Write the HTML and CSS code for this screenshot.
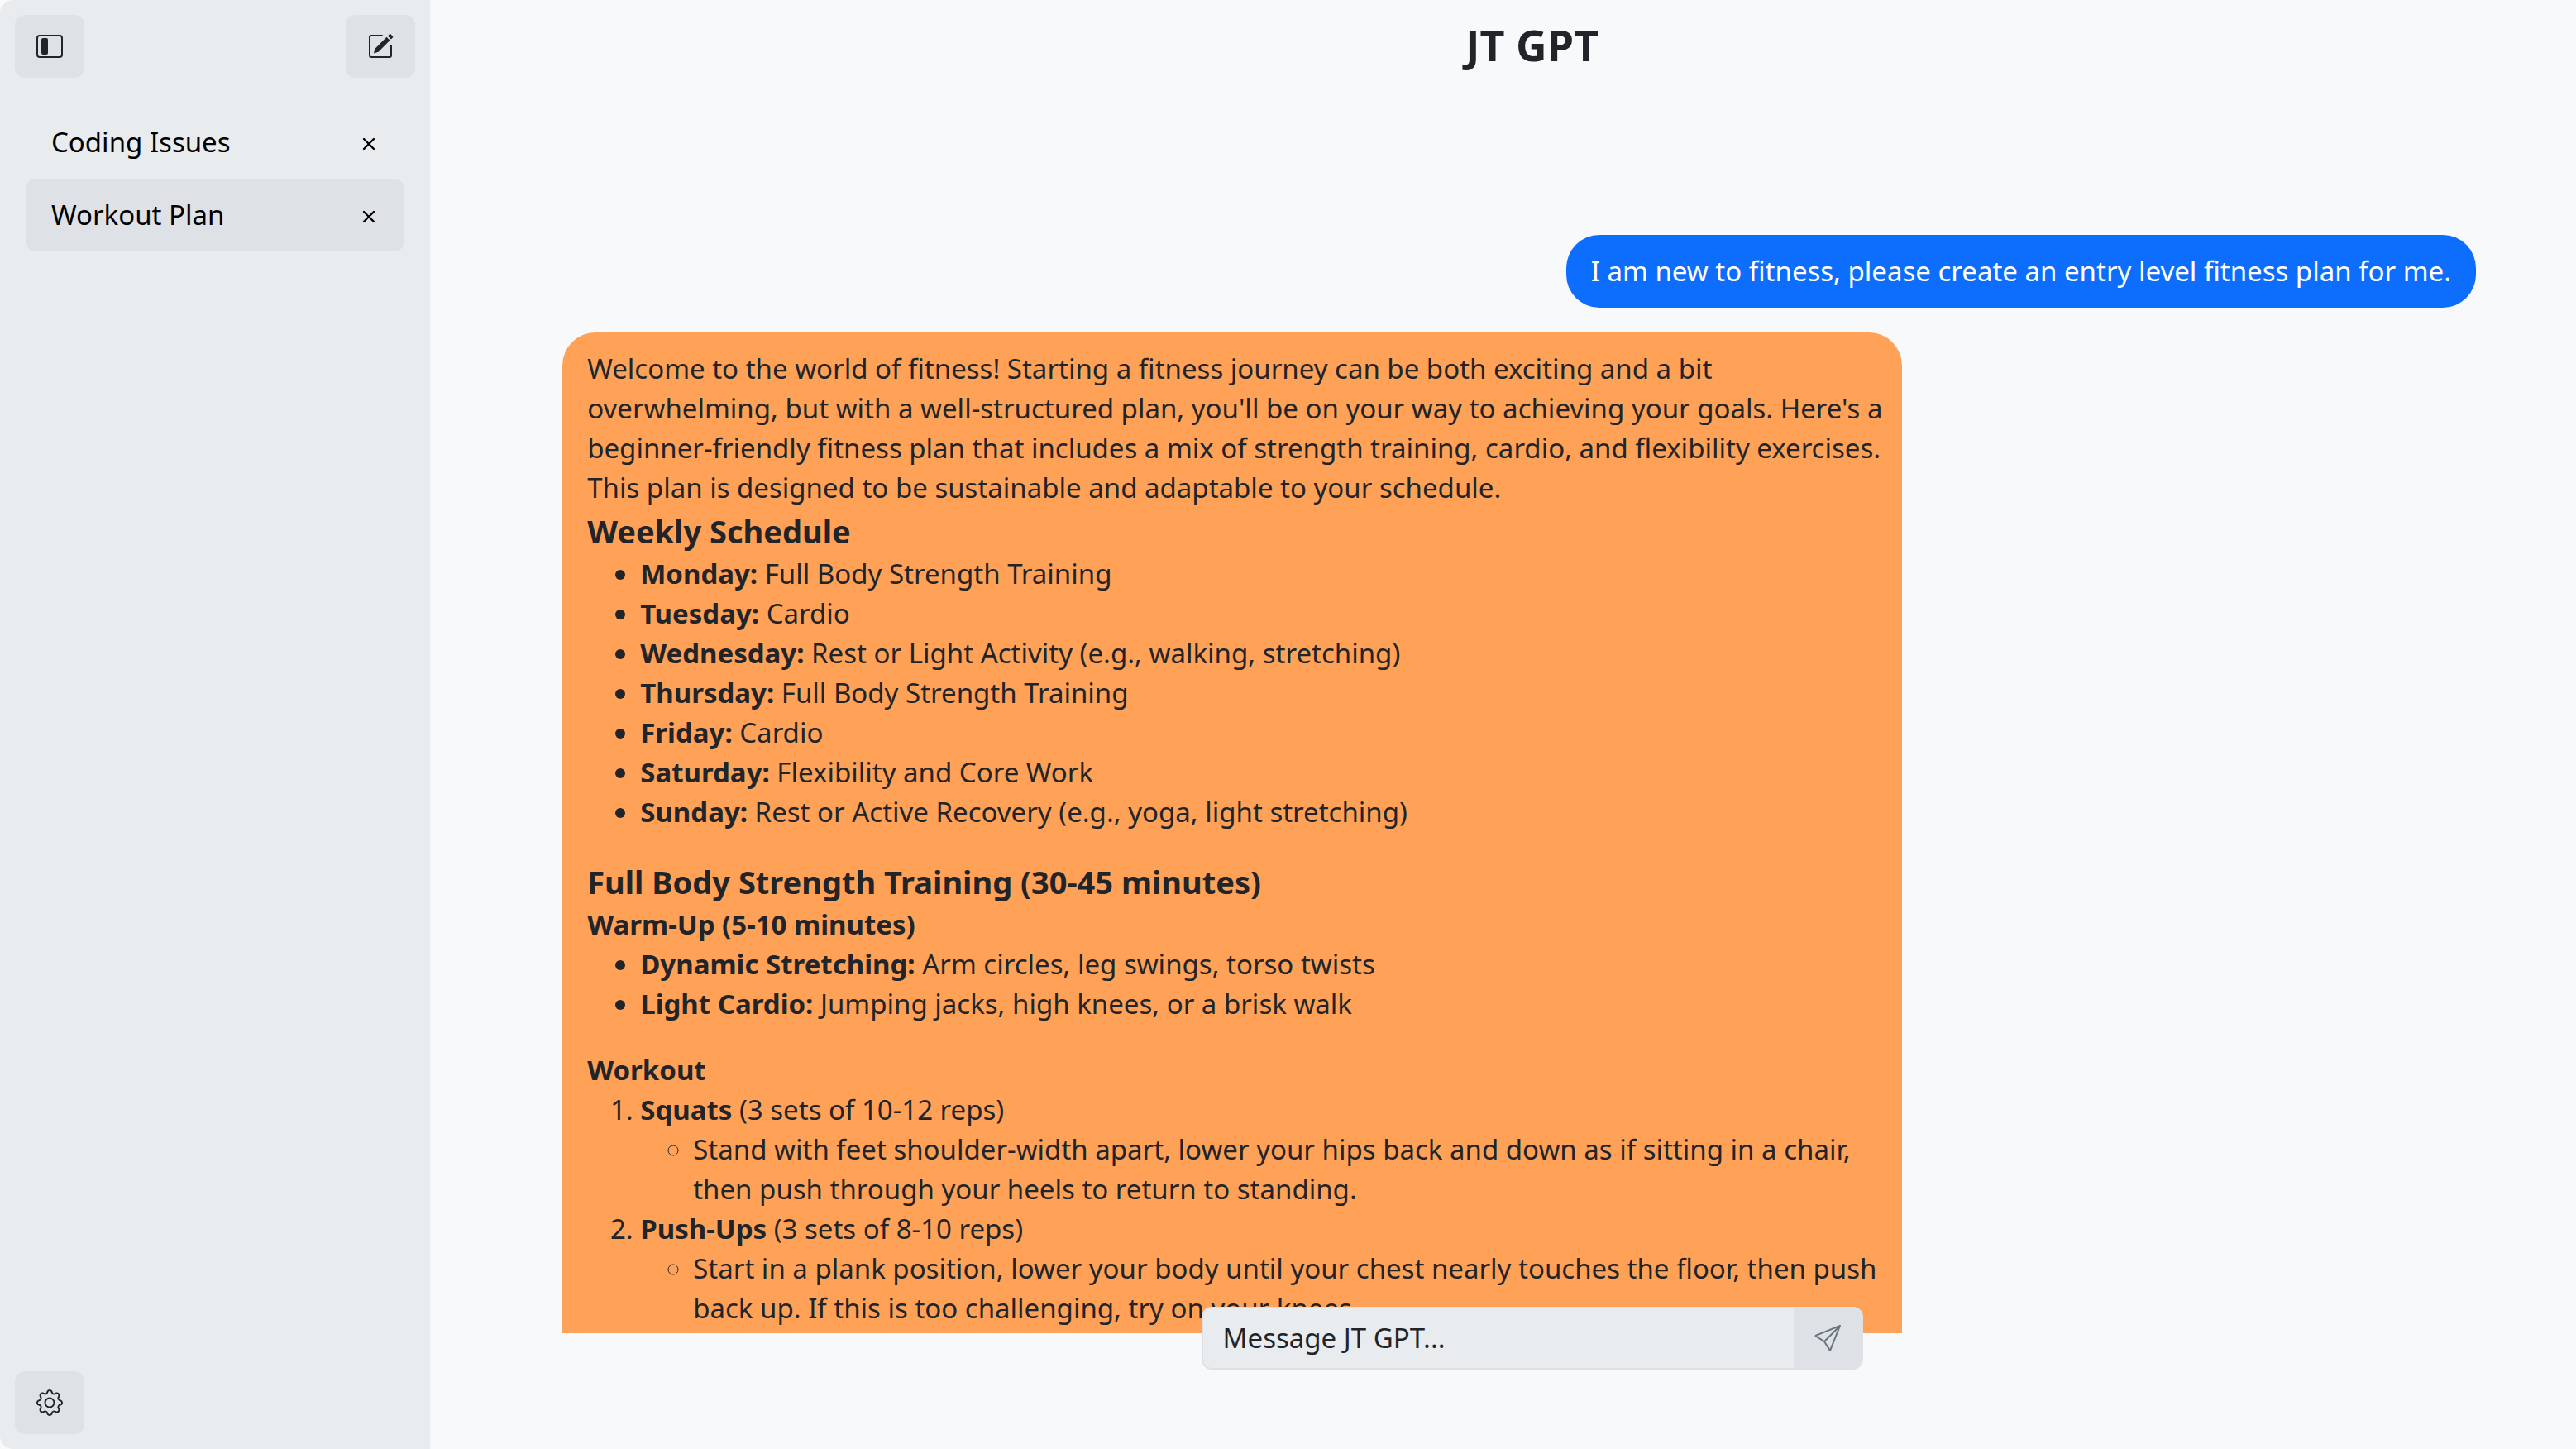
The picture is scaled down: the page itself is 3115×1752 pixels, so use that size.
FILE: index.html
```html
<!DOCTYPE html>
<html lang="en">
<head>
<meta charset="utf-8">
<meta name="viewport" content="width=device-width, initial-scale=1">
<title>JT GPT</title>
<link rel="stylesheet" href="styles.css">
</head>
<body>
<div class="app">
  <aside class="sidebar">
    <div class="toolbar">
      <button class="icon-btn" type="button" aria-label="Toggle sidebar">
        <svg class="icon" viewBox="0 0 16 16"><path d="M14 2a1 1 0 0 1 1 1v10a1 1 0 0 1-1 1H2a1 1 0 0 1-1-1V3a1 1 0 0 1 1-1zM2 1a2 2 0 0 0-2 2v10a2 2 0 0 0 2 2h12a2 2 0 0 0 2-2V3a2 2 0 0 0-2-2z"/><path d="M3 4a1 1 0 0 1 1-1h2a1 1 0 0 1 1 1v8a1 1 0 0 1-1 1H4a1 1 0 0 1-1-1z"/></svg>
      </button>
      <button class="icon-btn" type="button" aria-label="New chat">
        <svg class="icon" viewBox="0 0 16 16"><path d="M15.502 1.94a.5.5 0 0 1 0 .706L14.459 3.69l-2-2L13.502.646a.5.5 0 0 1 .707 0l1.293 1.293zm-1.75 2.456-2-2L4.939 9.21a.5.5 0 0 0-.121.196l-.805 2.414a.25.25 0 0 0 .316.316l2.414-.805a.5.5 0 0 0 .196-.12l6.813-6.814z"/><path d="M1 13.5A1.5 1.5 0 0 0 2.5 15h11a1.5 1.5 0 0 0 1.5-1.5v-6a.5.5 0 0 0-1 0v6a.5.5 0 0 1-.5.5h-11a.5.5 0 0 1-.5-.5v-11a.5.5 0 0 1 .5-.5H9a.5.5 0 0 0 0-1H2.5A1.5 1.5 0 0 0 1 2.5z"/></svg>
      </button>
    </div>
    <nav class="chats">
      <div class="chat-item">
        <a class="chat-link" href="#coding">Coding Issues</a>
        <button class="close-btn" type="button" aria-label="Delete Coding Issues"><svg class="close-icon" viewBox="0 0 16 16"><path d="M2 2l12 12M14 2L2 14"/></svg></button>
      </div>
      <div class="chat-item active">
        <a class="chat-link" href="#workout">Workout Plan</a>
        <button class="close-btn" type="button" aria-label="Delete Workout Plan"><svg class="close-icon" viewBox="0 0 16 16"><path d="M2 2l12 12M14 2L2 14"/></svg></button>
      </div>
    </nav>
    <button class="icon-btn" type="button" aria-label="Settings">
      <svg class="icon" viewBox="0 0 16 16"><path d="M8 4.754a3.246 3.246 0 1 0 0 6.492 3.246 3.246 0 0 0 0-6.492M5.754 8a2.246 2.246 0 1 1 4.492 0 2.246 2.246 0 0 1-4.492 0"/><path d="M9.796 1.343c-.527-1.79-3.065-1.79-3.592 0l-.094.319a.873.873 0 0 1-1.255.52l-.292-.16c-1.64-.892-3.433.902-2.54 2.541l.159.292a.873.873 0 0 1-.52 1.255l-.319.094c-1.79.527-1.79 3.065 0 3.592l.319.094a.873.873 0 0 1 .52 1.255l-.16.292c-.892 1.64.901 3.434 2.541 2.54l.292-.159a.873.873 0 0 1 1.255.52l.094.319c.527 1.79 3.065 1.79 3.592 0l.094-.319a.873.873 0 0 1 1.255-.52l.292.16c1.64.893 3.434-.902 2.54-2.541l-.159-.292a.873.873 0 0 1 .52-1.255l.319-.094c1.79-.527 1.79-3.065 0-3.592l-.319-.094a.873.873 0 0 1-.52-1.255l.16-.292c.893-1.64-.902-3.433-2.541-2.54l-.292.159a.873.873 0 0 1-1.255-.52zm-2.633.283c.246-.835 1.428-.835 1.674 0l.094.319a1.873 1.873 0 0 0 2.693 1.115l.291-.16c.764-.415 1.6.42 1.184 1.185l-.159.292a1.873 1.873 0 0 0 1.116 2.692l.318.094c.835.246.835 1.428 0 1.674l-.319.094a1.873 1.873 0 0 0-1.115 2.693l.16.291c.415.764-.42 1.6-1.185 1.184l-.291-.159a1.873 1.873 0 0 0-2.693 1.116l-.094.318c-.246.835-1.428.835-1.674 0l-.094-.319a1.873 1.873 0 0 0-2.692-1.115l-.292.16c-.764.415-1.6-.42-1.184-1.185l.159-.291A1.873 1.873 0 0 0 1.945 8.93l-.319-.094c-.835-.246-.835-1.428 0-1.674l.319-.094A1.873 1.873 0 0 0 3.06 4.377l-.16-.292c-.415-.764.42-1.6 1.185-1.184l.292.159a1.873 1.873 0 0 0 2.692-1.115z"/></svg>
    </button>
  </aside>

  <main class="main">
    <h1 class="title">JT GPT</h1>
    <section class="messages">
      <div class="bubble user">I am new to fitness, please create an entry level fitness plan for me.</div>
      <article class="bubble bot">
        <p>Welcome to the world of fitness! Starting a fitness journey can be both exciting and a bit overwhelming, but with a well-structured plan, you'll be on your way to achieving your goals. Here's a beginner-friendly fitness plan that includes a mix of strength training, cardio, and flexibility exercises. This plan is designed to be sustainable and adaptable to your schedule.</p>
        <h2>Weekly Schedule</h2>
        <ul>
          <li><strong>Monday:</strong> Full Body Strength Training</li>
          <li><strong>Tuesday:</strong> Cardio</li>
          <li><strong>Wednesday:</strong> Rest or Light Activity (e.g., walking, stretching)</li>
          <li><strong>Thursday:</strong> Full Body Strength Training</li>
          <li><strong>Friday:</strong> Cardio</li>
          <li><strong>Saturday:</strong> Flexibility and Core Work</li>
          <li><strong>Sunday:</strong> Rest or Active Recovery (e.g., yoga, light stretching)</li>
        </ul>
        <h2>Full Body Strength Training (30-45 minutes)</h2>
        <h3>Warm-Up (5-10 minutes)</h3>
        <ul>
          <li><strong>Dynamic Stretching:</strong> Arm circles, leg swings, torso twists</li>
          <li><strong>Light Cardio:</strong> Jumping jacks, high knees, or a brisk walk</li>
        </ul>
        <h3>Workout</h3>
        <ol>
          <li><strong>Squats</strong> (3 sets of 10-12 reps)
            <ul>
              <li>Stand with feet shoulder-width apart, lower your hips back and down as if sitting in a chair, then push through your heels to return to standing.</li>
            </ul>
          </li>
          <li><strong>Push-Ups</strong> (3 sets of 8-10 reps)
            <ul>
              <li>Start in a plank position, lower your body until your chest nearly touches the floor, then push back up. If this is too challenging, try on your knees.</li>
            </ul>
          </li>
        </ol>
      </article>
    </section>
    <form class="composer">
      <input class="composer-input" type="text" placeholder="Message JT GPT..." aria-label="Message JT GPT">
      <button class="send-btn" type="button" aria-label="Send">
        <svg class="icon" viewBox="0 0 16 16"><path d="M15.854.146a.5.5 0 0 1 .11.54l-5.819 14.547a.75.75 0 0 1-1.329.124l-3.178-4.995L.643 7.184a.75.75 0 0 1 .124-1.33L15.314.037a.5.5 0 0 1 .54.11ZM6.636 10.07l2.761 4.338L14.13 2.576zm6.787-8.201L1.591 6.602l4.339 2.76z"/></svg>
      </button>
    </form>
  </main>
</div>
</body>
</html>
```
FILE: styles.css
```css
* {
  box-sizing: border-box;
}

body {
  margin: 0;
  background: #f8f9fb;
  color: #212529;
  font-family: "Segoe UI", "Noto Sans", sans-serif;
  font-size: 33px;
  line-height: 48px;
}

button,
input {
  font: inherit;
  color: inherit;
}

button {
  padding: 0;
  border: 0;
  cursor: pointer;
}

.app {
  display: grid;
  grid-template-columns: 16.7% 1fr;
  height: 100vh;
}

.sidebar {
  display: flex;
  flex-direction: column;
  padding: 18px;
  background: #e9ecef;
  border-radius: 16px 0 0 16px;
}

.toolbar {
  display: flex;
  justify-content: space-between;
}

.icon-btn {
  display: flex;
  align-items: center;
  justify-content: center;
  width: 84px;
  height: 76px;
  border-radius: 12px;
  background: #dee2e6;
}

.icon {
  width: 32px;
  height: 32px;
  fill: currentColor;
}

.chats {
  flex: 1;
  padding: 34px 14px;
}

.chat-item {
  display: flex;
  align-items: center;
  justify-content: space-between;
  height: 88px;
  padding: 0 34px 0 30px;
  border-radius: 10px;
  color: #000;
}

.chat-item.active {
  background: #dee2e6;
}

.chat-link {
  color: inherit;
  text-decoration: none;
}

.close-btn {
  display: flex;
  padding-top: 4px;
  background: none;
}

.close-icon {
  width: 16px;
  height: 16px;
  stroke: currentColor;
  stroke-width: 2.4;
  stroke-linecap: round;
}

.main {
  display: flex;
  flex-direction: column;
  min-width: 0;
  min-height: 0;
}

.title {
  margin: 0;
  padding: 22px 0 26px 70px;
  font-size: 52px;
  line-height: 64px;
  text-align: center;
}

.messages {
  display: flex;
  flex: 1;
  flex-direction: column;
  gap: 30px;
  min-height: 0;
  margin: 0 121px 0 160px;
  padding-top: 172px;
  overflow: hidden;
}

.bubble {
  flex-shrink: 0;
  padding: 20px 30px;
  border-radius: 40px;
}

.user {
  align-self: flex-end;
  background: #0d6efd;
  color: #fff;
}

.bot {
  align-self: flex-start;
  width: 70%;
  padding-right: 20px;
  background: #ffa157;
}

.bot p {
  margin: 0;
}

.bot h2,
.bot h3 {
  margin: 0;
  font-weight: 700;
}

.bot h2 {
  font-size: 38px;
  line-height: 56px;
}

.bot h3 {
  font-size: 33px;
  line-height: 48px;
}

.bot ul,
.bot ol {
  margin: 0 0 32px;
  padding-left: 64px;
}

.bot li > ul {
  margin: 0;
}

.composer {
  position: relative;
  display: flex;
  align-self: center;
  width: 800px;
  max-width: 100%;
  height: 76px;
  margin: -32px 0 96px 70px;
  border: 2px solid #dee2e6;
  border-radius: 12px;
  background: #e9ecef;
  overflow: hidden;
}

.composer-input {
  flex: 1;
  min-width: 0;
  padding: 0 24px;
  border: 0;
  background: none;
}

.composer-input::placeholder {
  color: #212529;
  opacity: 1;
}

.send-btn {
  display: flex;
  align-items: center;
  justify-content: center;
  width: 82px;
  background: #dee2e6;
  color: #6c757d;
}
```
